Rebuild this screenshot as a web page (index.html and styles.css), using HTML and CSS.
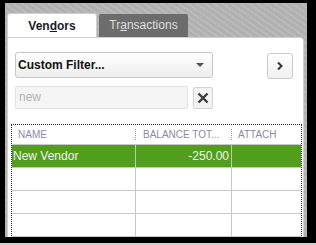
FILE: index.html
```html
<!doctype html>
<html>
	<head>
		<meta charset="UTF-8">
		<title>Vendors</title>
		<link rel="stylesheet" href="styles.css">
	</head>

	<body>
		<div class="screen">
			<ul class="tabs">
				<li class="tab on">Ven<u>d</u>ors</li>
				<li class="tab">Tr<u>a</u>nsactions</li>
			</ul>
			<div class="panel">
				<div class="row">
					<div class="select">
						<span>Custom Filter...</span>
						<i class="caret"></i>
					</div>
					<span class="btn">
						<svg width="8" height="10" viewBox="0 0 8 10"><polyline points="2,1.5 5.5,5 2,8.5" fill="none" stroke="#333" stroke-width="2"/></svg>
					</span>
				</div>
				<div class="row search">
					<div class="input">new</div>
					<span class="clear">
						<svg width="12" height="12" viewBox="0 0 12 12"><path d="M1.5 1.5L10.5 10.5M10.5 1.5L1.5 10.5" stroke="#3a3a3a" stroke-width="2.4"/></svg>
					</span>
				</div>
				<div class="grid">
					<div class="head">
						<div class="cell">Name</div>
						<div class="cell">Balance Tot...</div>
						<div class="cell">Attach</div>
					</div>
					<div class="line on">
						<div class="cell">New Vendor</div>
						<div class="cell num">-250.00</div>
						<div class="cell"></div>
					</div>
					<div class="line">
						<div class="cell"></div>
						<div class="cell"></div>
						<div class="cell"></div>
					</div>
					<div class="line">
						<div class="cell"></div>
						<div class="cell"></div>
						<div class="cell"></div>
					</div>
					<div class="line">
						<div class="cell"></div>
						<div class="cell"></div>
						<div class="cell"></div>
					</div>
					<div class="line">
						<div class="cell"></div>
						<div class="cell"></div>
						<div class="cell"></div>
					</div>
				</div>
			</div>
		</div>
	</body>

</html>
```

FILE: styles.css
```css
* {
	margin: 0;
	padding: 0;
	box-sizing: border-box;
}

li {
	list-style: none;
}

body {
	background-color: #d2d2d2;
	font-family: "Liberation Sans", Arial, sans-serif;
	font-size: 12px;
	color: #111;
}

.screen {
	overflow: hidden;
	width: 316px;
	height: 243px;
	border-style: solid;
	border-color: #000;
	border-width: 3px 9px 6px 5px;
	background-color: #b6b6b6;
	background-image: repeating-linear-gradient(35deg, rgba(255, 255, 255, .06) 0 2px, rgba(0, 0, 0, .03) 2px 5px);
}

.tabs {
	display: flex;
	align-items: flex-end;
	gap: 2px;
	padding: 10px 0 0 2px;
}

.tab {
	width: 89px;
	height: 23px;
	line-height: 22px;
	text-align: center;
	background-color: #6c6c6c;
	color: #dedede;
	border-radius: 2px 2px 0 0;
}

.tab.on {
	width: 90px;
	height: 24px;
	line-height: 24px;
	background-color: #fff;
	color: #1a1a2a;
	font-weight: bold;
	border: 1px solid #cfcfcf;
	border-bottom: none;
	border-radius: 3px 3px 0 0;
}

.panel {
	width: 297px;
	height: 210px;
	margin-left: 2px;
	padding: 13px 10px 0 7px;
	background-color: #fff;
	border: 1px solid #cfcfcf;
	border-radius: 0 4px 0 0;
}

.row {
	display: flex;
	align-items: center;
	justify-content: space-between;
}

.select {
	display: flex;
	align-items: center;
	justify-content: space-between;
	width: 198px;
	height: 26px;
	padding: 0 8px 0 2px;
	font-weight: bold;
	border: 1px solid #c6c6c6;
	border-radius: 3px;
	background: linear-gradient(#fff, #eeeeee);
}

.caret {
	width: 0;
	height: 0;
	border-left: 4px solid transparent;
	border-right: 4px solid transparent;
	border-top: 4px solid #555;
}

.btn {
	display: flex;
	align-items: center;
	justify-content: center;
	width: 26px;
	height: 26px;
	margin-top: 2px;
	border: 1px solid #cbcbcb;
	border-radius: 3px;
	background: linear-gradient(#fff, #f0f0f0);
}

.search {
	justify-content: flex-start;
	gap: 5px;
	margin-top: 7px;
}

.input {
	width: 173px;
	height: 23px;
	line-height: 21px;
	padding-left: 3px;
	color: #b2b2b2;
	background-color: #f5f5f5;
	border: 1px solid #e3e3e3;
	border-radius: 2px;
}

.clear {
	display: flex;
	align-items: center;
	justify-content: center;
	width: 20px;
	height: 22px;
	background-color: #f3f3f3;
	border: 1px solid #d3d3d3;
	border-radius: 2px;
}

.grid {
	width: 291px;
	margin: 15px 0 0 -4px;
	border: 1px dotted #222;
	border-bottom: none;
}

.head,
.line {
	display: grid;
	grid-template-columns: 124px 96px 1fr;
}

.head {
	height: 20px;
	border-bottom: 1px solid #c8c8c8;
	font-size: 10px;
	color: #8c89a5;
	text-transform: uppercase;
}

.head .cell {
	position: relative;
	line-height: 19px;
	padding-left: 6px;
}

.head .cell:nth-child(2) {
	padding-left: 7px;
}

.head .cell + .cell:before {
	position: absolute;
	left: -1px;
	top: 4px;
	height: 11px;
	content: "";
	border-left: 1px dotted #999;
}

.line {
	height: 23px;
	border-bottom: 1px solid #c8c8c8;
}

.line .cell {
	line-height: 22px;
	padding-left: 1px;
	border-right: 1px solid #c8c8c8;
}

.line .cell:last-child {
	border-right: none;
}

.line .num {
	text-align: right;
	padding-right: 2px;
}

.line.on {
	background-color: #509e1c;
	color: #f4f4f4;
}

.line.on .cell {
	border-right-color: #b9cfa8;
}
```
